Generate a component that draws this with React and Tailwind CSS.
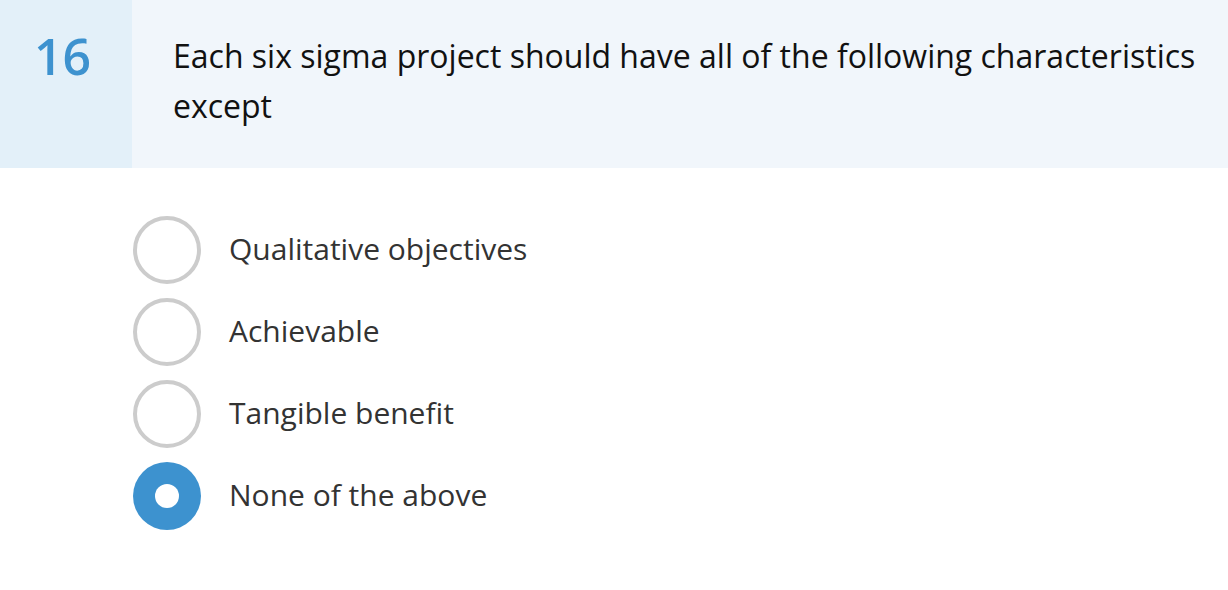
import React, { useState } from 'react';

const options = [
  'Qualitative objectives',
  'Achievable',
  'Tangible benefit',
  'None of the above',
];

const App = () => {
  const [selected, setSelected] = useState(3);

  return (
    <div className="w-[1228px] h-[590px] bg-white" style={{ fontFamily: '"Open Sans", "Noto Sans", sans-serif' }}>
      {/* Question header */}
      <div className="flex h-[168px]">
        <div className="w-[132px] shrink-0 bg-[#e3f0f9] pl-[34px] pt-[17px]">
          <span className="text-[50px] leading-[78px] font-semibold text-[#3d92cf]">16</span>
        </div>
        <div className="flex-1 bg-[#f1f6fb] pl-[41px] pr-[20px] pt-[31px]">
          <p className="text-[32px] leading-[50px] text-[#111]">
            Each six sigma project should have all of the following characteristics except
          </p>
        </div>
      </div>

      {/* Options */}
      <div className="pl-[133px] pt-[48px] flex flex-col gap-[14px]">
        {options.map((opt, i) => (
          <div
            key={opt}
            onClick={() => setSelected(i)}
            className="flex items-center gap-[28px] cursor-pointer"
          >
            {selected === i ? (
              <div className="w-[68px] h-[68px] rounded-full bg-[#3d92cf] flex items-center justify-center shrink-0">
                <div className="w-[24px] h-[24px] rounded-full bg-white"></div>
              </div>
            ) : (
              <div className="w-[68px] h-[68px] rounded-full border-[4px] border-[#cccccc] bg-white shrink-0"></div>
            )}
            <span className="text-[30px] leading-[40px] text-[#333] -mt-[3px]">{opt}</span>
          </div>
        ))}
      </div>
    </div>
  );
};

export default App;
